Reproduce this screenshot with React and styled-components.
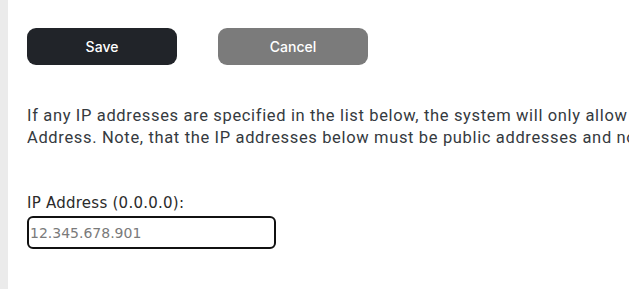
import styled, { createGlobalStyle } from 'styled-components';

const GlobalStyle = createGlobalStyle`
  html, body {
    margin: 0;
    padding: 0;
    background: #ffffff;
  }
  #root {
    min-height: 100vh;
  }
`;

const Page = styled.div`
  display: flex;
  min-height: 100vh;
  overflow: hidden;
`;

const SideStrip = styled.div`
  width: 8px;
  flex-shrink: 0;
  background-color: #ebebeb;
`;

const Content = styled.div`
  flex: 1;
  min-width: 0;
  padding: 28px 0 0 19px;
`;

const ButtonRow = styled.div`
  display: flex;
  gap: 41px;
`;

const ActionButton = styled.button`
  width: 150px;
  height: 37px;
  border: none;
  border-radius: 9px;
  background-color: ${(props) => (props.secondary ? '#7b7b7b' : '#212429')};
  color: #ffffff;
  font-family: Inter, 'Liberation Sans', sans-serif;
  font-size: 14px;
  font-weight: 500;
  cursor: pointer;
`;

const Notice = styled.p`
  margin: 40px 0 0;
  font-family: Roboto, 'Noto Sans', sans-serif;
  font-size: 16.5px;
  letter-spacing: 0.65px;
  line-height: 22px;
  color: #353a40;
  white-space: nowrap;
  overflow: hidden;
`;

const Field = styled.div`
  display: flex;
  flex-direction: column;
  margin-top: 45px;
`;

const Label = styled.label`
  font-family: 'DejaVu Sans', sans-serif;
  font-size: 15px;
  letter-spacing: 0.25px;
  line-height: 18px;
  color: #2b2b2b;
  margin-bottom: 4px;
`;

const IpInput = styled.input`
  width: 249px;
  height: 33px;
  box-sizing: border-box;
  border: 2px solid #111111;
  border-radius: 6px;
  padding: 0 0 0 1px;
  font-family: 'DejaVu Sans', sans-serif;
  font-size: 14px;
  color: #7a7a7a;
  outline: none;
`;

export default function App() {
  return (
    <>
      <GlobalStyle />
      <Page>
        <SideStrip />
        <Content>
          <ButtonRow>
            <ActionButton>Save</ActionButton>
            <ActionButton secondary>Cancel</ActionButton>
          </ButtonRow>
          <Notice>
            If any IP addresses are specified in the list below, the system will only allow access from that IP
            <br />
            Address. Note, that the IP addresses below must be public addresses and not private ones.
          </Notice>
          <Field>
            <Label htmlFor="ip">IP Address (0.0.0.0):</Label>
            <IpInput id="ip" type="text" defaultValue="12.345.678.901" />
          </Field>
        </Content>
      </Page>
    </>
  );
}
